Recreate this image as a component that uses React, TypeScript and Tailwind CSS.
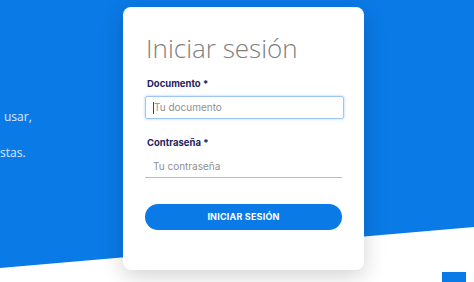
export default function App() {
  return (
    <div className="relative w-[474px] h-[282px] overflow-hidden bg-white">
      {/* slanted blue backdrop */}
      <div className="absolute inset-0 bg-[#0a7ae6] [clip-path:polygon(0_0,100%_0,100%_227px,0_268px)]" />
      <div className="absolute left-[442px] top-[272px] w-[24px] h-[10px] bg-[#0a7ae6]" />

      <div className="relative flex h-full">
        {/* left copy, cut off by the viewport */}
        <div className="w-[123px] shrink-0 pt-[107px] text-[12px] text-white/85 font-['Open_Sans',sans-serif]">
          <p className="pl-[4px] leading-[20px]">usar,</p>
          <p className="mt-[16px] leading-[20px]">stas.</p>
        </div>

        {/* login card */}
        <div className="mt-[7px] w-[241px] h-[263px] rounded-[8px] bg-white px-[22px] pt-[25px] shadow-[0_6px_22px_rgba(0,0,0,0.18)]">
          <h1 className="text-[26px] leading-[32px] font-light text-[#808080] font-['Open_Sans',sans-serif] pl-px">
            Iniciar sesión
          </h1>

          <form className="mt-[13px] font-['Inter',sans-serif]" onSubmit={(e) => e.preventDefault()}>
            <label className="block text-[9.5px] leading-[14px] font-bold text-[#1f2260] pl-[2px]">
              Documento *
            </label>
            <div className="mt-[5px] flex h-[23px] w-[199px] items-center rounded-[2px] border border-[#9fc6f2] px-[7px] shadow-[0_0_3px_rgba(10,122,230,0.35)]">
              <span className="h-[12px] w-px bg-[#444]" />
              <span className="text-[10px] text-[#8f8f8f]">Tu documento</span>
            </div>

            <label className="mt-[17px] block text-[9.5px] leading-[14px] font-bold text-[#1f2260] pl-[2px]">
              Contraseña *
            </label>
            <div className="mt-[6px] flex h-[22px] w-[197px] items-center border-b border-[#b3bccb] px-[8px]">
              <span className="text-[10px] text-[#8f8f8f]">Tu contraseña</span>
            </div>

            <button
              type="submit"
              className="mt-[26px] flex h-[26px] w-[197px] items-center justify-center rounded-full bg-[#0a7ae6] text-[9px] font-bold tracking-[0.2px] text-white"
            >
              INICIAR SESIÓN
            </button>
          </form>
        </div>
      </div>
    </div>
  );
}
